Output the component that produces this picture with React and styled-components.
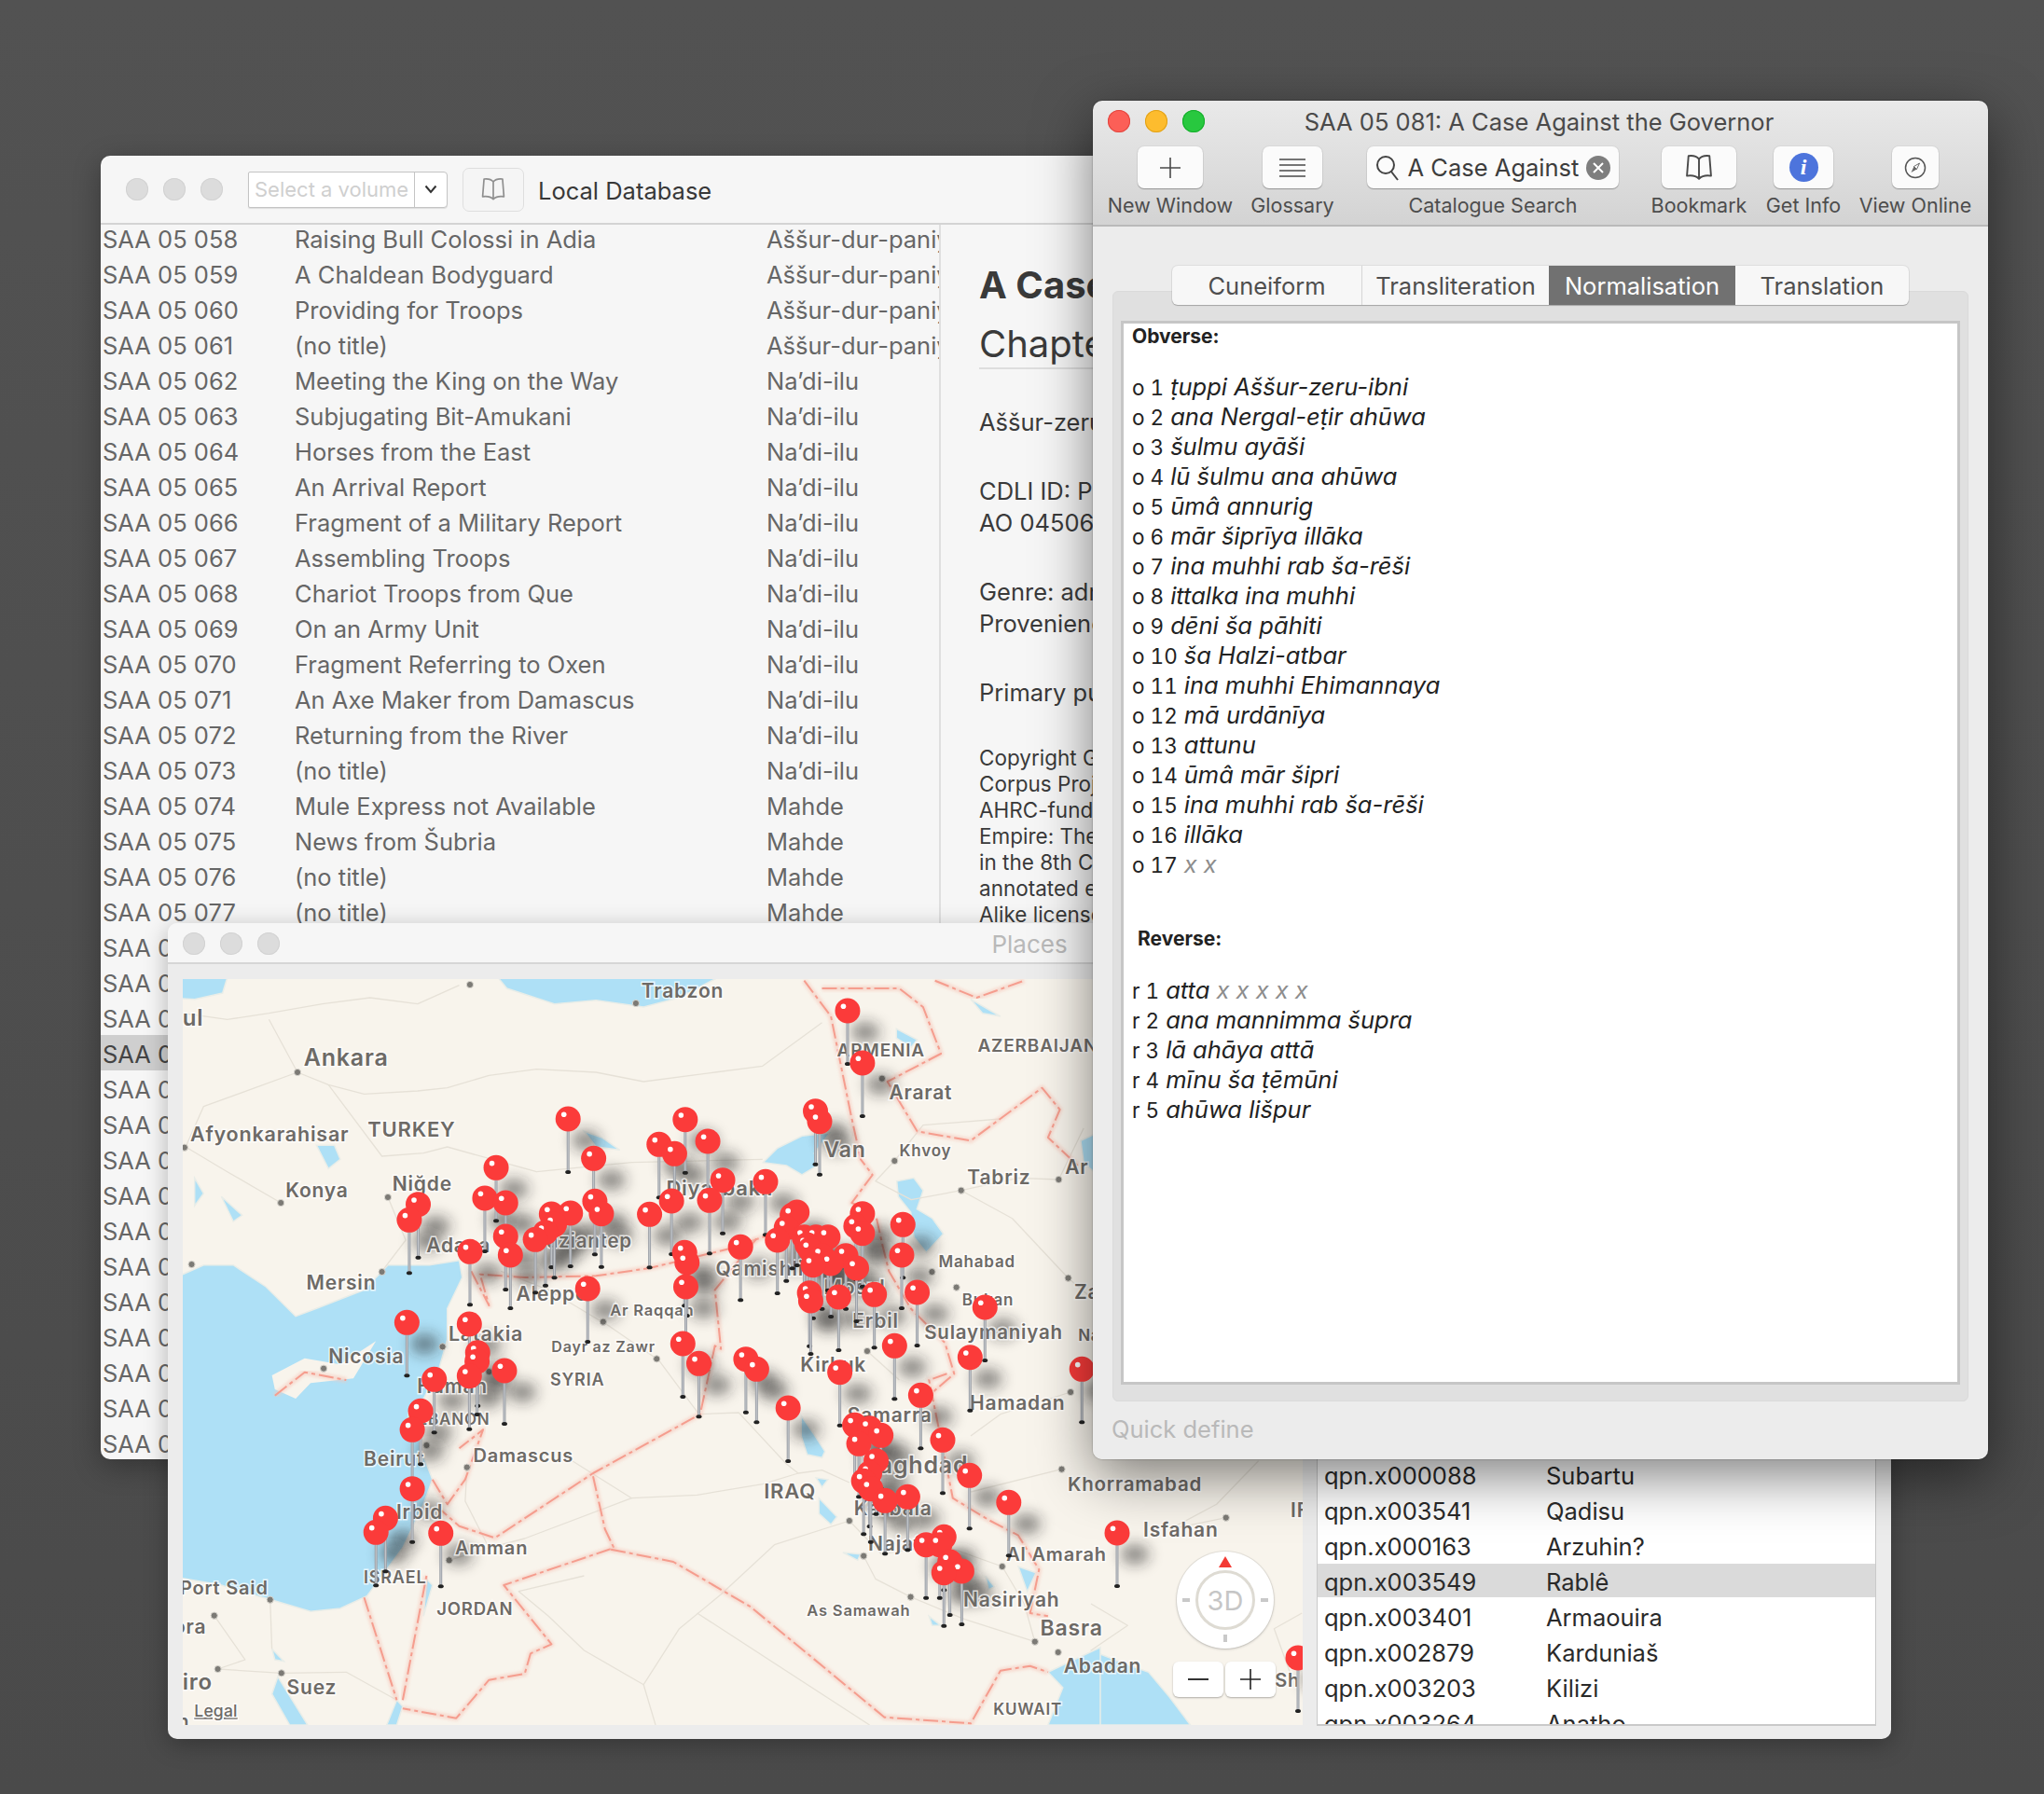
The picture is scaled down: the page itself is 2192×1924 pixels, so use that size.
import React from "react";
import styled, { createGlobalStyle } from "styled-components";

const SANS = `Inter, "Noto Sans", "Liberation Sans", sans-serif`;

const Global = createGlobalStyle`
  html, body { margin: 0; padding: 0; background: #4e4e4e; }
  * { box-sizing: border-box; }
`;

/* ------ helpers for drawing coordinates (page pixels) ------ */
const z3 = (X, Y) => [180 + X / 1.568, 980 + Y / 3];
const z4 = (X, Y) => [180 + X / 1.568, 1400 + Y / 3];
const z5 = (X, Y) => [1170 + X / 1.782, 1400 + Y / 3];
const z6 = (X, Y) => [780 + X / 3, 1150 + Y / 3];
const S = 1.398;
const path = (fn, pts, close) =>
  "M" + pts.map((p) => fn(p[0], p[1]).map((n) => n.toFixed(1)).join(" ")).join("L") + (close ? "Z" : "");

/* ------ desktop and windows ------ */
const Desktop = styled.div`
  position: relative;
  width: 2192px;
  height: 1924px;
  overflow: hidden;
  background: linear-gradient(#525252, #4a4a4a);
  font-family: ${SANS};
`;
const Window = styled.section`
  position: absolute;
  left: ${(p) => p.$x}px;
  top: ${(p) => p.$y}px;
  width: ${(p) => p.$w}px;
  height: ${(p) => p.$h}px;
  border-radius: 10px;
  overflow: hidden;
  display: flex;
  flex-direction: column;
  z-index: ${(p) => p.$z};
  box-shadow: ${(p) => p.$shadow};
`;
const Lights = styled.div`
  display: flex;
  gap: 16px;
  flex: none;
`;
const Light = styled.span`
  width: 24px;
  height: 24px;
  border-radius: 50%;
  background: ${(p) => p.$c};
  box-shadow: inset 0 0 0 1px ${(p) => p.$b};
`;

/* ------ library window ------ */
const LibBar = styled.header`
  height: 74px;
  flex: none;
  position: relative;
  z-index: 2;
  display: flex;
  align-items: center;
  padding: 0 0 0 27px;
  background: #f6f6f6;
  border-bottom: 2px solid #d4d4d4;
`;
const VolumeSelect = styled.div`
  margin-left: 27px;
  width: 214px;
  height: 39px;
  display: flex;
  background: #fff;
  border: 1px solid #c4c4c4;
  border-radius: 2px 4px 4px 2px;
  box-shadow: 0 1px 1px rgba(0,0,0,.1);
`;
const VolumeText = styled.span`
  width: 178px;
  padding-left: 6px;
  font-size: 22px;
  line-height: 36px;
  color: #cfcfcf;
  border-right: 1px solid #c4c4c4;
  white-space: nowrap;
  overflow: hidden;
`;
const VolumeCaret = styled.span`
  flex: 1;
  display: flex;
  align-items: center;
  justify-content: center;
`;
const GhostButton = styled.div`
  margin-left: 16px;
  width: 66px;
  height: 47px;
  display: flex;
  align-items: center;
  justify-content: center;
  border: 1px solid #dedede;
  border-radius: 7px;
  background: #f5f5f5;
`;
const BarTitle = styled.div`
  margin: 2px 0 0 15px;
  font-size: 25.5px;
  color: #383838;
`;
const LibBody = styled.div`
  flex: 1;
  display: flex;
  background: #f6f6f6;
  overflow: hidden;
`;
const DocList = styled.div`
  width: 901px;
  flex: none;
  margin-top: -5px;
  border-right: 2px solid #dfdfdf;
  overflow: hidden;
`;
const DocRow = styled.div`
  height: 38px;
  padding: 2px 0 0 2px;
  display: grid;
  grid-template-columns: 206px 506px 187px;
  align-items: center;
  background: ${(p) => (p.$sel ? "#cfcfcf" : "transparent")};
  color: ${(p) => (p.$sel ? "#444" : "#666")};
  font-size: 25.5px;
  white-space: nowrap;
`;
const Cell = styled.span`
  overflow: hidden;
`;
const Detail = styled.article`
  padding: 41px 0 0 41px;
  width: 600px;
  flex: none;
  color: #3a3a3a;
`;
const H1 = styled.h1`
  margin: 0;
  font-size: 40px;
  line-height: 48px;
  font-weight: 700;
  white-space: nowrap;
`;
const H2 = styled.h2`
  margin: 16px 0 40px;
  padding-bottom: 2px;
  font-size: 40px;
  line-height: 46px;
  font-weight: 400;
  white-space: nowrap;
  border-bottom: 2px solid #dedede;
`;
const P = styled.p`
  margin: 0 0 40px;
  font-size: 25.5px;
  line-height: 34px;
  white-space: nowrap;
`;
const Small = styled.p`
  margin: 0;
  font-size: 22.5px;
  line-height: 28px;
  white-space: nowrap;
  position: relative;
  top: -1px;
`;

/* ------ places window ------ */
const PlacesBar = styled.header`
  height: 44px;
  flex: none;
  position: relative;
  display: flex;
  align-items: center;
  justify-content: center;
  background: #f6f6f6;
  border-bottom: 2px solid #d6d6d6;
`;
const PlacesLights = styled.div`
  position: absolute;
  left: 16px;
  top: 10px;
`;
const PlacesTitle = styled.div`
  padding-top: 2px;
  font-size: 26px;
  color: #b9b9b9;
`;
const PlacesBody = styled.div`
  flex: 1;
  display: flex;
  padding: 16px 16px 14px 16px;
  gap: 15px;
  background: #ececec;
  min-height: 0;
`;
const MapPane = styled.div`
  position: relative;
  width: 1201px;
  height: 800px;
  flex: none;
  overflow: hidden;
  background: #f8f4ec;
`;
const MapSvg = styled.svg`
  display: block;
  width: 1201px;
  height: 800px;
`;
const MapLabel = styled.text`
  font-family: ${SANS};
  font-weight: ${(p) => p.$w || 600};
  letter-spacing: ${(p) => p.$ls ?? 0.8}px;
  fill: ${(p) => p.$c || "#6d6a66"};
  stroke: rgba(255, 255, 255, 0.72);
  stroke-width: 3px;
  paint-order: stroke;
  dominant-baseline: middle;
`;
const Compass = styled.div`
  position: absolute;
  left: 1066px;
  top: 614px;
  width: 104px;
  height: 104px;
  border-radius: 50%;
  background: #fff;
  box-shadow: 0 0 0 1px rgba(0,0,0,.06), 0 1px 3px rgba(0,0,0,.2);
  display: flex;
  align-items: center;
  justify-content: center;
`;
const CompassRing = styled.div`
  width: 64px;
  height: 64px;
  border-radius: 50%;
  border: 3px solid #dedbd3;
  display: flex;
  align-items: center;
  justify-content: center;
  font-size: 29px;
  color: #c6c6c6;
`;
const CompassNeedle = styled.span`
  position: absolute;
  left: 45px;
  top: 5px;
  width: 0;
  height: 0;
  border-left: 7px solid transparent;
  border-right: 7px solid transparent;
  border-bottom: 12px solid #f33a34;
`;
const CompassTick = styled.span`
  position: absolute;
  left: ${(p) => p.$x}px;
  top: ${(p) => p.$y}px;
  width: ${(p) => p.$w}px;
  height: ${(p) => p.$h}px;
  background: #c9c9c9;
`;
const ZoomGroup = styled.div`
  position: absolute;
  left: 1062px;
  top: 732px;
  display: flex;
  gap: 2px;
`;
const ZoomBtn = styled.div`
  width: 54px;
  height: 38px;
  border-radius: 6px;
  background: #fff;
  box-shadow: 0 1px 2px rgba(0,0,0,.3);
  display: flex;
  align-items: center;
  justify-content: center;
`;
const NameList = styled.div`
  flex: 1;
  min-width: 0;
  padding-top: 18px;
  background: #fff;
  border: 1px solid #c9c9c9;
  border-bottom-width: 2px;
  overflow: hidden;
`;
const NameRow = styled.div`
  height: 36px;
  margin-bottom: 2px;
  padding: 2px 0 0 7px;
  display: grid;
  grid-template-columns: 238px 1fr;
  align-items: center;
  font-size: 25.5px;
  color: #2a2a2a;
  white-space: nowrap;
  background: ${(p) => (p.$sel ? "#dadada" : "transparent")};
`;

/* ------ text window ------ */
const TextBar = styled.header`
  height: 135px;
  flex: none;
  display: flex;
  flex-direction: column;
  background: linear-gradient(#e9e9e9, #d3d3d3);
  border-bottom: 2px solid #b9b9b9;
`;
const TitleRow = styled.div`
  position: relative;
  height: 49px;
  display: flex;
  align-items: center;
  justify-content: center;
  padding: 0 3px 4px 0;
  font-size: 25.5px;
  color: #4a4a4a;
`;
const TitleLights = styled.div`
  position: absolute;
  left: 16px;
  top: 10px;
`;
const Tools = styled.div`
  display: grid;
  grid-template-columns: 142px 120px 310px 132px 92px 148px;
  padding-left: 12px;
`;
const Tool = styled.div`
  display: flex;
  flex-direction: column;
  align-items: center;
  gap: 5px;
  font-size: 21.5px;
  color: #4d4d4d;
  white-space: nowrap;
`;
const ToolBtn = styled.div`
  width: ${(p) => p.$w}px;
  height: 45px;
  border-radius: 7px;
  background: #fbfbfb;
  box-shadow: 0 0 0 1px rgba(0,0,0,.04), 0 1px 1px rgba(0,0,0,.28);
  display: flex;
  align-items: center;
  justify-content: center;
  gap: 8px;
  color: #3d3d3d;
  font-size: 25.5px;
`;
const InfoDot = styled.div`
  width: 31px;
  height: 31px;
  border-radius: 50%;
  background: #4d74dc;
  color: #fff;
  font: italic 700 24px/31px "Liberation Serif", serif;
  text-align: center;
`;
const ClearDot = styled.span`
  width: 26px;
  height: 26px;
  border-radius: 50%;
  background: #7e7e7e;
  display: flex;
  align-items: center;
  justify-content: center;
  flex: none;
`;
const TextBody = styled.div`
  flex: 1;
  display: flex;
  flex-direction: column;
  background: #ececec;
  min-height: 0;
  padding: 42px 21px 0 21px;
`;
const TabPanel = styled.div`
  position: relative;
  height: 1191px;
  flex: none;
  margin-top: 27px;
  padding: 31px 8px 0;
  background: #e0e0e0;
  border: 1px solid #dadada;
  border-radius: 6px;
`;
const TabBar = styled.nav`
  position: absolute;
  left: 63px;
  top: -28px;
  width: 790px;
  height: 42px;
  display: grid;
  grid-template-columns: 203px 201px 200px 1fr;
  background: #f7f7f7;
  border-radius: 6px;
  box-shadow: 0 0 0 1px rgba(0,0,0,.06), 0 1px 1px rgba(0,0,0,.22);
  overflow: hidden;
`;
const Tab = styled.div`
  display: flex;
  align-items: center;
  justify-content: center;
  font-size: 25.5px;
  color: ${(p) => (p.$on ? "#fff" : "#4e4e4e")};
  background: ${(p) => (p.$on ? "#717171" : "transparent")};
  border-left: ${(p) => (p.$first || p.$on ? "none" : "1px solid #d6d6d6")};
`;
const TextView = styled.div`
  height: 1141px;
  padding: 1px 0 0 9px;
  background: #fff;
  border: 3px solid #c6c6c6;
  color: #222;
`;
const Heading = styled.div`
  font-size: 21px;
  line-height: 26px;
  font-weight: 700;
  margin: ${(p) => p.$m};
  padding-left: ${(p) => p.$i || 0}px;
`;
const Line = styled.div`
  height: 32px;
  line-height: 32px;
  font-size: 25.5px;
  font-style: italic;
  white-space: nowrap;
`;
const LineNo = styled.span`
  font-style: normal;
  font-size: 22.5px;
  font-variant-numeric: tabular-nums;
  margin-right: 7px;
`;
const Broken = styled.span`
  color: #8d8d8d;
`;
const QuickDefine = styled.div`
  margin-left: -1px;
  margin-top: 14px;
  font-size: 25.5px;
  color: #b9b9b9;
`;

/* ------ data ------ */
const docs = [
  ["058", "Raising Bull Colossi in Adia", "Aššur-dur-paniya"],
  ["059", "A Chaldean Bodyguard", "Aššur-dur-paniya"],
  ["060", "Providing for Troops", "Aššur-dur-paniya"],
  ["061", "(no title)", "Aššur-dur-paniya"],
  ["062", "Meeting the King on the Way", "Na’di-ilu"],
  ["063", "Subjugating Bit-Amukani", "Na’di-ilu"],
  ["064", "Horses from the East", "Na’di-ilu"],
  ["065", "An Arrival Report", "Na’di-ilu"],
  ["066", "Fragment of a Military Report", "Na’di-ilu"],
  ["067", "Assembling Troops", "Na’di-ilu"],
  ["068", "Chariot Troops from Que", "Na’di-ilu"],
  ["069", "On an Army Unit", "Na’di-ilu"],
  ["070", "Fragment Referring to Oxen", "Na’di-ilu"],
  ["071", "An Axe Maker from Damascus", "Na’di-ilu"],
  ["072", "Returning from the River", "Na’di-ilu"],
  ["073", "(no title)", "Na’di-ilu"],
  ["074", "Mule Express not Available", "Mahde"],
  ["075", "News from Šubria", "Mahde"],
  ["076", "(no title)", "Mahde"],
  ["077", "(no title)", "Mahde"],
];
for (let n = 78; n <= 92; n++) docs.push(["0" + n, "(no title)", "Mahde"]);

const names = [
  ...Array.from({ length: 13 }, (_, i) => ["qpn.x0000" + (10 + i), "—"]),
  ["qpn.x000088", "Subartu"],
  ["qpn.x003541", "Qadisu"],
  ["qpn.x000163", "Arzuhin?"],
  ["qpn.x003549", "Rablê"],
  ["qpn.x003401", "Armaouira"],
  ["qpn.x002879", "Karduniaš"],
  ["qpn.x003203", "Kilizi"],
  ["qpn.x003264", "Anatho"],
];

const obverse = [
  ["ṭuppi Aššur-zeru-ibni"], ["ana Nergal-eṭir ahūwa"], ["šulmu ayāši"], ["lū šulmu ana ahūwa"],
  ["ūmâ annurig"], ["mār šiprīya illāka"], ["ina muhhi rab ša-rēši"], ["ittalka ina muhhi"],
  ["dēni ša pāhiti"], ["ša Halzi-atbar"], ["ina muhhi Ehimannaya"], ["mā urdānīya"], ["attunu"],
  ["ūmâ mār šipri"], ["ina muhhi rab ša-rēši"], ["illāka"], ["", "x x"],
];
const reverse = [
  ["atta ", "x x x x x"], ["ana mannimma šupra"], ["lā ahāya attā"], ["mīnu ša ṭēmūni"], ["ahūwa lišpur"],
];

/* map labels: [text, x, y, size] in reference thumbnail coordinates */
const labels = [
  ["Trabzon", 492, 760, 21], ["ul", 140, 781, 24], ["Ankara", 233, 811, 25],
  ["ARMENIA", 642, 805, 19], ["AZERBAIJAN", 750, 802, 19], ["Ararat", 682, 838, 21],
  ["Afyonkarahisar", 146, 870, 21.5], ["TURKEY", 282, 866, 22], ["Van", 632, 882, 23],
  ["Khvoy", 690, 882, 17], ["Tabriz", 742, 903, 21], ["Konya", 219, 913, 21],
  ["Niğde", 301, 908, 21], ["Diyarbakır", 511, 911, 22], ["Ar", 817, 895, 21],
  ["Adana", 327, 955, 21], ["Gaziantep", 408, 952, 20.5], ["Qamishli", 549, 973, 21],
  ["Mahabad", 720, 967, 17], ["Mersin", 235, 984, 21], ["Aleppo", 396, 992, 21],
  ["Mosul", 632, 987, 21], ["Bukan", 738, 997, 17], ["Za", 824, 991, 21],
  ["Ar Raqqah", 468, 1005, 16.5], ["Erbil", 654, 1013, 21], ["Latakia", 344, 1023, 21.5],
  ["Sulaymaniyah", 709, 1022, 20.5], ["Na", 827, 1024, 17], ["Dayr az Zawr", 423, 1033, 16],
  ["Nicosia", 252, 1040, 21], ["SYRIA", 422, 1058, 18], ["Kirkuk", 614, 1047, 21],
  ["Hamah", 320, 1063, 21], ["Hamadan", 744, 1076, 21], ["LEBANON", 313, 1088, 17],
  ["Samarra", 650, 1085, 21], ["Baghdad", 662, 1124, 25], ["Beirut", 279, 1119, 21],
  ["Damascus", 363, 1116, 20], ["Khorramabad", 819, 1138, 20.5], ["IRAQ", 586, 1144, 22],
  ["Isfahan", 877, 1173, 21], ["Irbid", 304, 1160, 21], ["Karbala", 655, 1157, 21],
  ["Najaf", 666, 1184, 21], ["Amman", 349, 1187, 20], ["Al Amarah", 772, 1192, 20],
  ["ISRAEL", 279, 1210, 18], ["Port Said", 138, 1218, 20], ["Nasiriyah", 739, 1227, 21],
  ["JORDAN", 335, 1234, 18.5], ["As Samawah", 619, 1235, 16.5], ["Basra", 798, 1249, 23],
  ["ora", 133, 1248, 21], ["Abadan", 816, 1278, 21], ["iro", 140, 1290, 24],
  ["Suez", 220, 1294, 21], ["Sh", 978, 1289, 20], ["KUWAIT", 762, 1311, 17], ["n", 136, 1320, 20], ["IF", 990, 1158, 21],
];

/* city dots */
const dots = [
  z3(508, 228), z3(787, 288), z3(218, 510), z3(1201, 530), z3(28, 752), z3(190, 930), z3(370, 912), z3(1222, 795),
  z3(1334, 890), z3(1498, 855), z3(40, 1128), z3(360, 1152), z3(1285, 1152), z3(1326, 1202), z3(1514, 1172),
  z3(732, 1313), z3(462, 1393), z3(822, 1432), z3(262, 1463), z3(1176, 1407), z4(540, 213), z4(435, 450), z4(503, 521),
  z4(473, 820), z4(1518, 279), z4(1146, 693), z4(1170, 806), z4(1249, 938), z4(1403, 840), z4(1503, 527), z4(172, 947),
  z4(78, 998), z4(84, 1170), z4(191, 1183), z4(1458, 1082), z4(1497, 1116), z5(258, 683),
];

/* pin head centres */
const pins = [
  ...[
    [1143, 312], [1168, 480], [1089, 635], [1096, 668], [673, 660], [870, 662], [826, 742], [852, 772], [908, 732],
    [716, 787], [552, 817], [933, 857], [1005, 862], [533, 915], [568, 930], [421, 935], [406, 985], [847, 924],
    [911, 922], [810, 967], [645, 966], [677, 963], [718, 925], [729, 965], [650, 1000], [635, 1025], [618, 1048],
    [568, 1038], [508, 1087], [576, 1098], [963, 1072], [1025, 1050], [1040, 1010], [1050, 970], [1058, 960],
    [1168, 965], [1157, 1005], [1168, 1028], [1236, 1000], [1234, 1098], [869, 1090], [873, 1122], [871, 1200],
    [706, 1206], [1079, 1220], [1081, 1245], [1128, 1233], [1188, 1225], [1260, 1218], [1374, 1266], [1222, 1390],
    [1349, 1427], [866, 1383], [893, 1447], [972, 1433], [990, 1465], [1130, 1475], [402, 1315], [507, 1320],
    [521, 1412], [520, 1440], [507, 1487], [566, 1470], [1537, 1465], [1070, 1040], [1075, 1065], [1090, 1040],
    [1110, 1040], [1140, 1100], [1085, 1130], [1115, 1125], [1158, 1140], [1100, 1100], [1080, 1080],
  ].map((p) => z3(p[0], p[1])),
  ...[
    [448, 238], [425, 340], [411, 400], [411, 590], [366, 685], [350, 730], [459, 733], [1043, 330], [1155, 385],
    [1180, 395], [1199, 418], [1162, 445], [1191, 500], [1303, 433], [1266, 289], [1348, 547], [1414, 634], [1180, 540],
    [1170, 565], [1182, 590], [1206, 628], [1244, 616], [1305, 745], [1275, 770], [1298, 770], [1315, 825], [1305, 860],
    [1335, 855],
  ].map((p) => z4(p[0], p[1])),
  [1198, 1644],
  [1392, 1778],
].sort((a, b) => a[1] - b[1]);

const water = [
  path(z3, [[0,1170],[25,1160],[60,1130],[110,1130],[165,1200],[215,1295],[250,1270],[330,1210],[370,1130],[440,1130],[490,1115],[495,1170],[470,1270],[470,1400]]) +
    path(z4, [[470,110],[455,210],[430,300],[420,380],[425,460],[445,560],[430,640],[395,780],[335,935],[290,975],[240,985],[170,945],[130,925],[90,900],[0,870]]).replace("M", "L") + "Z",
  path(z3, [[0,205],[100,205],[92,255],[45,275],[0,270]], true),
  path(z3, [[555,205],[925,205],[860,270],[800,300],[720,278],[650,290],[570,240]], true),
  path(z6, [[115,290],[160,245],[240,205],[330,195],[280,260],[290,300],[240,330],[190,300]], true),
  path(z6, [[545,350],[600,340],[630,380],[610,440],[660,470],[695,520],[640,580],[600,530],[590,450],[550,400]], true),
  path(z3, [[250,745],[280,745],[290,790],[270,820]], true),
  path(z3, [[1225,370],[1260,405],[1250,430],[1225,400]], true),
  path(z3, [[1350,275],[1400,330],[1370,320]], true),
  path(z3, [[700,700],[730,720],[760,760],[720,750]], true),
  path(z3, [[45,850],[60,900],[45,940]], true),
  path(z3, [[90,910],[125,970],[110,990]], true),
  path(z3, [[1535,730],[1568,700],[1568,850],[1540,800]], true),
  path(z4, [[1065,355],[1085,410],[1105,470],[1100,490],[1075,480],[1065,420]], true),
  path(z4, [[1095,620],[1125,680],[1115,705],[1095,670]], true),
  path(z4, [[1090,555],[1110,560],[1100,585]], true),
  path(z4, [[1135,795],[1165,800],[1160,820]], true),
  path(z4, [[1280,1000],[1300,1030],[1285,1030]], true),
  path(z4, [[1375,870],[1390,905],[1380,915]], true),
  path(z4, [[1430,840],[1460,860],[1445,920]], true),
  path(z4, [[435,880],[445,900],[430,1000]], true),
  path(z4, [[175,1105],[195,1145],[180,1140]], true),
  path(z4, [[185,1195],[235,1350],[205,1350],[175,1250]], true),
  path(z4, [[385,1270],[395,1290],[385,1350],[368,1350]], true),
  path(z5, [[0,1110],[60,1150],[110,1180],[150,1260],[190,1350],[0,1350]], true),
  path(z4, [[1480,1180],[1568,1100],[1568,1350],[1480,1350],[1505,1230]], true),
];
const cyprus = path(z4, [[175,225],[230,170],[290,190],[350,115],[312,235],[240,250],[215,300],[180,270]], true);

const borders = [
  path(z3, [[1070,215],[1115,330],[1148,640],[1165,790],[1185,840],[1150,930],[1175,950]]),
  path(z3, [[1100,240],[1230,240],[1270,300],[1300,450],[1210,540],[1260,700],[1350,730],[1470,560],[1500,630],[1480,720],[1530,810]]),
  path(z3, [[1290,215],[1360,270],[1440,215]]),
  path(z3, [[510,1150],[540,1260],[525,1160],[600,1170],[720,1165],[810,1140],[950,1075],[1000,1040],[1040,1020]]),
  path(z3, [[990,1045],[920,1210],[930,1400]]) + path(z4, [[920,130],[895,350],[715,540],[550,748],[490,710],[460,660]]).replace("M", "L"),
  path(z4, [[715,550],[735,720],[750,780],[565,900],[645,1090],[610,1120],[600,1185],[540,1205],[485,1328],[395,1297]]),
  path(z4, [[745,785],[850,825],[980,970],[1205,1325],[1350,1345],[1400,1175],[1450,1160],[1480,1180]]),
  path(z4, [[330,940],[385,1270]]),
  path(z4, [[395,1270],[435,870]]),
  path(z4, [[445,560],[470,640],[500,560],[530,400],[490,460]]),
  path(z6, [[480,470],[500,560],[520,640],[590,760],[640,810],[700,870],[730,970],[660,1030]]),
  path(z4, [[1310,220],[1280,240],[1320,620],[1380,690],[1430,740],[1465,850],[1450,990],[1480,1000]]),
  path(z4, [[180,290],[230,215],[300,240]]),
];
const roads = [
  path(z3, [[25,320],[100,340],[170,320],[260,290],[340,270],[420,290],[490,230]]),
  path(z3, [[170,340],[218,510],[270,550],[330,580],[420,570],[470,560],[540,520],[620,500],[720,510],[800,540],[920,510],[1000,490],[1100,350]]),
  path(z3, [[218,510],[60,620],[30,750]]),
  path(z3, [[270,550],[360,780],[430,770],[470,750],[620,830],[780,800],[1000,790]]),
  path(z3, [[190,930],[100,830],[30,750]]),
  path(z3, [[370,912],[400,1050],[360,1150]]),
  path(z3, [[1222,795],[1190,860],[1250,920],[1334,890],[1430,850],[1498,855],[1540,690]]),
  path(z3, [[1334,890],[1420,980],[1514,1172],[1568,1260]]),
  path(z3, [[1222,795],[1270,680],[1400,660]]),
  path(z3, [[730,1313],[640,1210],[560,1150]]),
  path(z3, [[822,1432],[732,1313]]),
  path(z3, [[1176,1407],[1230,1500]]),
  path(z4, [[503,521],[500,630],[540,780],[473,820]]),
  path(z4, [[680,500],[780,620],[890,610],[1000,575],[1060,540],[1100,530],[1146,570]]),
  path(z4, [[780,620],[600,750],[540,780]]),
  path(z4, [[700,870],[590,920],[640,1000],[700,1110],[800,1220],[860,1040],[930,930],[1020,770],[1146,693]]),
  path(z4, [[800,1220],[820,1350]]),
  path(z4, [[890,990],[1180,1350]]),
  path(z4, [[1170,806],[1190,880],[1249,938],[1340,1010],[1458,1082]]),
  path(z4, [[1146,693],[1200,800],[1300,770],[1403,840],[1440,960],[1458,1082]]),
  path(z4, [[823,170],[893,350],[960,345],[1040,510],[1060,540]]),
  path(z4, [[1518,279],[1400,350],[1350,420]]),
  path(z4, [[1503,527],[1350,600]]),
  path(z4, [[78,998],[130,1140],[84,1170]]),
  path(z4, [[84,1170],[191,1183],[300,1180],[385,1270]]),
  path(z4, [[172,947],[175,1105]]),
  path(z5, [[258,683],[150,720],[240,640],[320,500]]),
  path(z5, [[0,960],[70,1030],[0,1110]]),
  path(z5, [[403,990],[350,1040],[380,1180]]),
];

/* ------ icons ------ */
const BookIcon = ({ c = "#4a4a4a", w = 26 }) => (
  <svg width={w} height={w * 0.86} viewBox="0 0 30 26" fill="none" stroke={c} strokeWidth="1.7" strokeLinejoin="round">
    <path d="M15 5C13 2.5 9 1.5 5 2L3.5 21c4-.6 8.5-.2 11.5 2.8V5Z" />
    <path d="M15 5c2-2.5 6-3.5 10-3l1.5 19c-4-.6-8.5-.2-11.5 2.8" />
  </svg>
);
const PlusIcon = ({ s = 24, c = "#4a4a4a" }) => (
  <svg width={s} height={s} viewBox="0 0 24 24" stroke={c} strokeWidth="1.6">
    <path d="M12 1v22M1 12h22" />
  </svg>
);
const ListIcon = () => (
  <svg width="30" height="24" viewBox="0 0 30 24" stroke="#4a4a4a" strokeWidth="1.6">
    <path d="M1 3h28M1 9h28M1 15h28M1 21h28" />
  </svg>
);
const SearchIcon = () => (
  <svg width="27" height="30" viewBox="0 0 27 30" fill="none" stroke="#444" strokeWidth="2">
    <circle cx="11" cy="12" r="9" />
    <path d="M17 19l7 9" />
  </svg>
);
const CompassIcon = () => (
  <svg width="24" height="24" viewBox="0 0 24 24" fill="none" stroke="#555" strokeWidth="1.5">
    <circle cx="12" cy="12" r="10.5" />
    <path d="M16.5 7 10.5 10.5 7.5 17l6-3.5z" fill="#666" stroke="none" />
    <path d="M16.5 7 10.5 10.5 13.5 13.5z" fill="#fff" stroke="#555" strokeWidth=".8" />
  </svg>
);

/* ------ map ------ */
const Pin = ({ x, y }) => (
  <g>
    <rect x={x - 1.5} y={y} width="3" height="57" fill="#9ea2a9" />
    <rect x={x - 0.5} y={y} width="1" height="57" fill="#c4c7cb" />
    <ellipse cx={x} cy={y + 57} rx="3" ry="2" fill="#222" />
    <circle cx={x} cy={y} r="13.5" fill="#fb3b3a" />
    <circle cx={x - 4.5} cy={y - 4.7} r="2.8" fill="#fff" />
  </g>
);

const MapView = () => (
  <MapPane>
    <MapSvg viewBox="196 1050 1201 800">
      <defs>
        <filter id="pinBlur" x="-150%" y="-150%" width="400%" height="400%">
          <feGaussianBlur stdDeviation="8" />
        </filter>
        <filter id="borderBlur" x="-5%" y="-5%" width="110%" height="110%">
          <feGaussianBlur stdDeviation="1.4" />
        </filter>
      </defs>
      <rect x="196" y="1050" width="1201" height="800" fill="#f8f4ec" />
      {water.map((d, i) => (
        <path key={i} d={d} fill="#aee0f6" stroke="#e9ede8" strokeWidth="1.5" />
      ))}
      <path d={cyprus} fill="#f8f4ec" />
      {roads.map((d, i) => (
        <path key={i} d={d} fill="none" stroke="#e6e1d7" strokeWidth="1.3" strokeLinejoin="round" />
      ))}
      {borders.map((d, i) => (
        <g key={i} fill="none" strokeLinejoin="round">
          <path d={d} stroke="#f6c8bb" strokeWidth="6" opacity="0.55" filter="url(#borderBlur)" />
          <path d={d} stroke="#f59d8e" strokeWidth="2" strokeDasharray="16 4 4 4" />
        </g>
      ))}
      {dots.map((p, i) => (
        <circle key={i} cx={p[0]} cy={p[1]} r="3.6" fill="#7c7a75" stroke="#d9d6cf" strokeWidth="1" />
      ))}
      {pins.map((p, i) => (
        <ellipse
          key={i}
          cx={p[0] + 19}
          cy={p[1] + 23}
          rx="15"
          ry="10"
          fill="#1d1d1d"
          opacity="0.55"
          filter="url(#pinBlur)"
        />
      ))}
      {labels.map(([t, x, y, size], i) => (
        <MapLabel key={i} x={x * S} y={y * S + 2} fontSize={size}>
          {t}
        </MapLabel>
      ))}
      <MapLabel x={149 * S} y={1312 * S + 2} fontSize={17.5} textDecoration="underline" $ls={0.2} $w={500}>
        Legal
      </MapLabel>
      {pins.map((p, i) => (
        <Pin key={i} x={p[0]} y={p[1]} />
      ))}
    </MapSvg>
    <Compass>
      <CompassNeedle />
      <CompassTick $x={6} $y={50} $w={8} $h={4} />
      <CompassTick $x={90} $y={50} $w={8} $h={4} />
      <CompassTick $x={50} $y={89} $w={4} $h={8} />
      <CompassRing>3D</CompassRing>
    </Compass>
    <ZoomGroup>
      <ZoomBtn>
        <svg width="24" height="24" viewBox="0 0 24 24" stroke="#333" strokeWidth="2">
          <path d="M1 12h22" />
        </svg>
      </ZoomBtn>
      <ZoomBtn>
        <PlusIcon c="#222" />
      </ZoomBtn>
    </ZoomGroup>
  </MapPane>
);

const mainLines = (rows, prefix) =>
  rows.map((r, i) => (
    <Line key={i}>
      <LineNo>
        {prefix} {i + 1}
      </LineNo>
      {r[0]}
      {r[1] && <Broken>{r[1]}</Broken>}
    </Line>
  ));

export default function App() {
  return (
    <>
      <Global />
      <Desktop>
        {/* library window */}
        <Window $x={108} $y={167} $w={1220} $h={1398} $z={1} $shadow="0 8px 30px rgba(0,0,0,.3)">
          <LibBar>
            <Lights>
              <Light $c="#dcdcdc" $b="#d2d2d2" />
              <Light $c="#dcdcdc" $b="#d2d2d2" />
              <Light $c="#dcdcdc" $b="#d2d2d2" />
            </Lights>
            <VolumeSelect>
              <VolumeText>Select a volume</VolumeText>
              <VolumeCaret>
                <svg width="14" height="10" viewBox="0 0 14 10" fill="none" stroke="#333" strokeWidth="2">
                  <path d="M1.5 1.5 7 8l5.5-6.5" />
                </svg>
              </VolumeCaret>
            </VolumeSelect>
            <GhostButton>
              <BookIcon c="#8f8f8f" w={30} />
            </GhostButton>
            <BarTitle>Local Database</BarTitle>
          </LibBar>
          <LibBody>
            <DocList>
              {docs.map((d) => (
                <DocRow key={d[0]} $sel={d[0] === "081"}>
                  <Cell>SAA 05 {d[0]}</Cell>
                  <Cell>{d[1]}</Cell>
                  <Cell>{d[2]}</Cell>
                </DocRow>
              ))}
            </DocList>
            <Detail>
              <H1>A Case Against the Governor</H1>
              <H2>Chapter 5</H2>
              <P>Aššur-zeru-ibni</P>
              <P>
                CDLI ID: P334075
                <br />
                AO 04506
              </P>
              <P>
                Genre: administrative
                <br />
                Provenience: Nineveh
              </P>
              <P>Primary publication</P>
              <Small>Copyright Giancarlo</Small>
              <Small>Corpus Project</Small>
              <Small>AHRC-funded</Small>
              <Small>Empire: The</Small>
              <Small>in the 8th Century</Small>
              <Small>annotated edition</Small>
              <Small>Alike license</Small>
            </Detail>
          </LibBody>
        </Window>

        {/* places window */}
        <Window $x={180} $y={990} $w={1848} $h={875} $z={2} $shadow="0 6px 26px rgba(0,0,0,.28)">
          <PlacesBar>
            <PlacesLights>
              <Lights>
                <Light $c="#dcdcdc" $b="#d2d2d2" />
                <Light $c="#dcdcdc" $b="#d2d2d2" />
                <Light $c="#dcdcdc" $b="#d2d2d2" />
              </Lights>
            </PlacesLights>
            <PlacesTitle>Places</PlacesTitle>
          </PlacesBar>
          <PlacesBody>
            <MapView />
            <NameList>
              {names.map((n, i) => (
                <NameRow key={i} $sel={n[1] === "Rablê"}>
                  <span>{n[0]}</span>
                  <span>{n[1]}</span>
                </NameRow>
              ))}
            </NameList>
          </PlacesBody>
        </Window>

        {/* text window */}
        <Window $x={1172} $y={108} $w={960} $h={1457} $z={3} $shadow="0 18px 60px rgba(0,0,0,.5), 0 0 2px rgba(0,0,0,.4)">
          <TextBar>
            <TitleRow>
              <TitleLights>
                <Lights>
                  <Light $c="#fc5f57" $b="#e2463f" />
                  <Light $c="#fdbc2e" $b="#e1a116" />
                  <Light $c="#28c83f" $b="#14ae2a" />
                </Lights>
              </TitleLights>
              SAA 05 081: A Case Against the Governor
            </TitleRow>
            <Tools>
              <Tool>
                <ToolBtn $w={70}>
                  <PlusIcon />
                </ToolBtn>
                New Window
              </Tool>
              <Tool>
                <ToolBtn $w={64}>
                  <ListIcon />
                </ToolBtn>
                Glossary
              </Tool>
              <Tool>
                <ToolBtn $w={270}>
                  <SearchIcon />
                  <span>A Case Against</span>
                  <ClearDot>
                    <svg width="12" height="12" viewBox="0 0 12 12" stroke="#fff" strokeWidth="2">
                      <path d="M1 1l10 10M11 1 1 11" />
                    </svg>
                  </ClearDot>
                </ToolBtn>
                Catalogue Search
              </Tool>
              <Tool>
                <ToolBtn $w={80}>
                  <BookIcon w={34} />
                </ToolBtn>
                Bookmark
              </Tool>
              <Tool>
                <ToolBtn $w={64}>
                  <InfoDot>i</InfoDot>
                </ToolBtn>
                Get Info
              </Tool>
              <Tool>
                <ToolBtn $w={50}>
                  <CompassIcon />
                </ToolBtn>
                View Online
              </Tool>
            </Tools>
          </TextBar>
          <TextBody>
            <TabPanel>
              <TabBar>
                <Tab $first>Cuneiform</Tab>
                <Tab>Transliteration</Tab>
                <Tab $on>Normalisation</Tab>
                <Tab $first>Translation</Tab>
              </TabBar>
              <TextView>
                <Heading $m="0 0 25px">Obverse:</Heading>
                {mainLines(obverse, "o")}
                <Heading $m="51px 0 26px" $i={6}>
                  Reverse:
                </Heading>
                {mainLines(reverse, "r")}
              </TextView>
            </TabPanel>
            <QuickDefine>Quick define</QuickDefine>
          </TextBody>
        </Window>
      </Desktop>
    </>
  );
}
